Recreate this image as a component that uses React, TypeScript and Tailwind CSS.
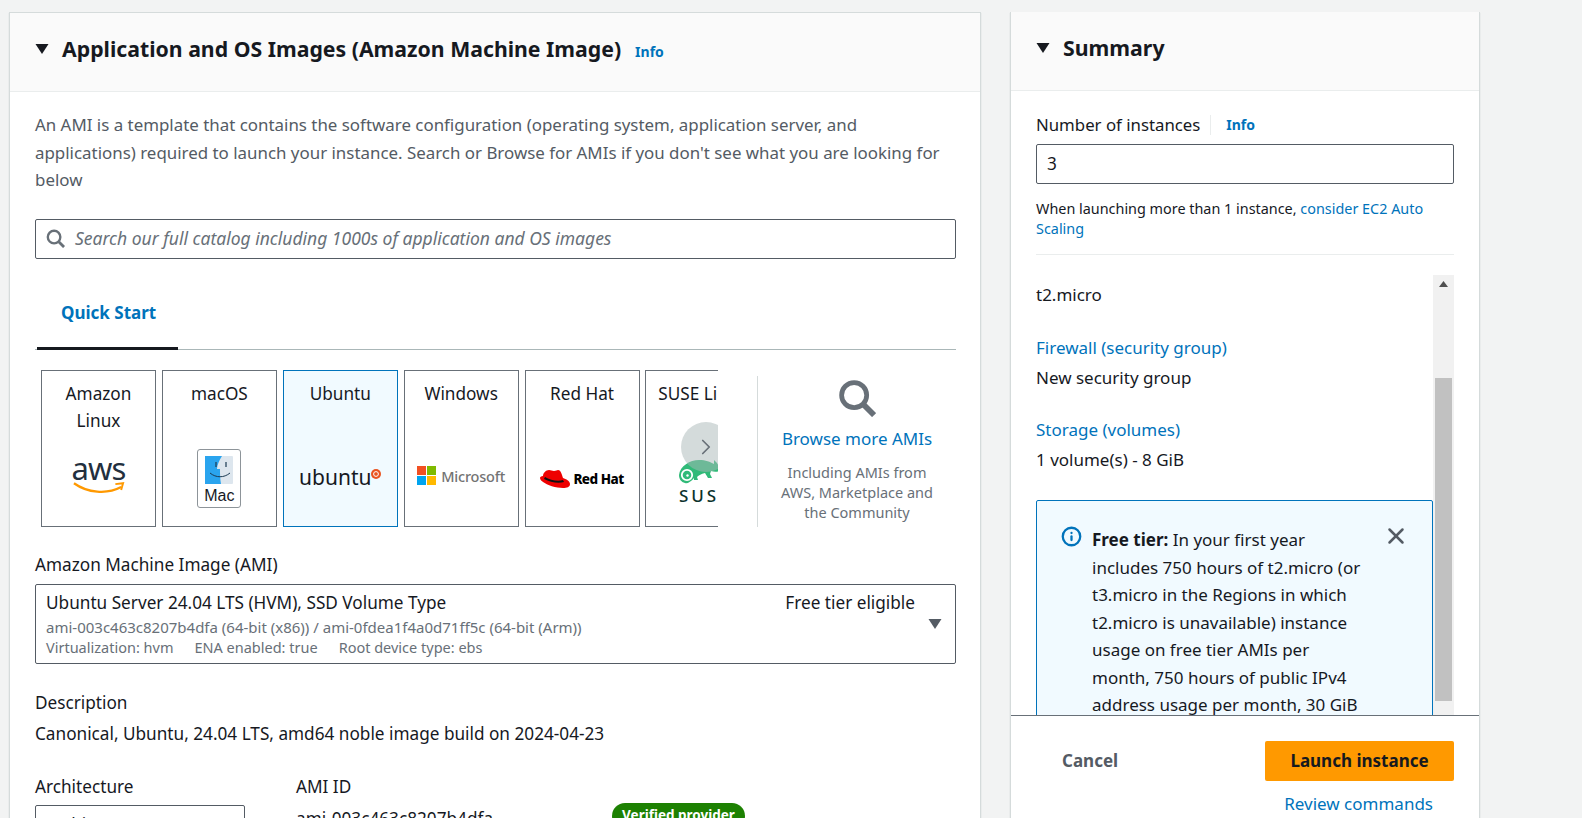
import { X, ChevronRight, Info as InfoIcon } from "lucide-react";
import type { ReactNode } from "react";

function Caret() {
  return (
    <svg width="14" height="12" viewBox="0 0 14 12" className="shrink-0">
      <path d="M0.5 1h13L7 11z" fill="#16191f" />
    </svg>
  );
}

function SearchGlyph({ size, className }: { size: number; className: string }) {
  return (
    <svg width={size} height={size} viewBox="0 0 20 20" fill="none" stroke="currentColor" className={className}>
      <circle cx="8.5" cy="8.5" r="6.6" strokeWidth="2.5" />
      <path d="M13.4 13.4L19 19" strokeWidth="3" />
    </svg>
  );
}

function AwsLogo() {
  return (
    <div className="flex flex-col items-center">
      <span className="text-[31px] leading-[26px] tracking-[-0.8px] text-[#232f3e]">aws</span>
      <svg width="52" height="14" viewBox="0 0 54 14">
        <path d="M1 2c14 10 34 12 49 4" stroke="#ff9900" strokeWidth="2.4" fill="none" />
        <path d="M44 3l8-1-2 7" stroke="#ff9900" strokeWidth="2" fill="none" />
      </svg>
    </div>
  );
}

function MacLogo() {
  return (
    <div className="flex h-[59px] w-[44px] flex-col items-center rounded-[3px] border border-[#8d9499] bg-white pt-[6px]">
      <svg width="28" height="28" viewBox="0 0 28 28">
        <rect width="28" height="28" rx="1" fill="#dde6ee" />
        <path d="M0 0h17c-3 5-5 9-5 13h3c0 5 0 10 1 15H0z" fill="#2aa4ee" />
        <path d="M11 6v5M21 6v5" stroke="#1b3a52" strokeWidth="1.2" />
        <path d="M5 17c6 5 14 5 20 0" stroke="#1b3a52" strokeWidth="1" fill="none" />
      </svg>
      <span className="mt-[3px] font-['Liberation_Sans',sans-serif] text-[16px] leading-[18px] text-[#16191f]">Mac</span>
    </div>
  );
}

function UbuntuLogo() {
  return (
    <div className="flex items-start">
      <span className="text-[21px] leading-[26px] text-[#16191f]">ubuntu</span>
      <svg width="10" height="10" viewBox="0 0 10 10" className="mt-[5px]">
        <circle cx="5" cy="5" r="5" fill="#e95420" />
        <circle cx="5" cy="5" r="2.4" stroke="#fff" strokeWidth="1" fill="none" />
      </svg>
    </div>
  );
}

function MicrosoftLogo() {
  return (
    <div className="flex items-center gap-[5px]">
      <div className="grid grid-cols-2 gap-[1px]">
        <div className="size-[9px] bg-[#f25022]" />
        <div className="size-[9px] bg-[#7fba00]" />
        <div className="size-[9px] bg-[#00a4ef]" />
        <div className="size-[9px] bg-[#ffb900]" />
      </div>
      <span className="text-[14.5px] leading-5 font-medium tracking-[-0.2px] text-[#737373]">Microsoft</span>
    </div>
  );
}

function RedHatLogo() {
  return (
    <div className="flex items-center gap-[3px]">
      <svg width="30" height="20" viewBox="0 0 30 20">
        <path d="M9 1c2 0 3 1 5 1s3-1 4-1c3 0 4 5 5 8 3 1 7 3 7 6 0 3-3 4-7 4-7 0-16-3-20-6-1-1-3-2-3-4 0-1 1-2 3-2 0-3 3-6 6-6z" fill="#e00" />
        <path d="M5 8c5 3 13 5 18 3l1 2c-6 2-14 0-20-3z" fill="#111" />
      </svg>
      <span className="text-[13.5px] leading-5 font-extrabold tracking-[-0.5px] text-black">Red Hat</span>
    </div>
  );
}

function SuseLogo() {
  return (
    <div className="flex w-[70px] flex-col items-start">
      <svg width="44" height="24" viewBox="0 0 44 24">
        <path d="M0 15C1 6 11 0 20 0c7 0 11 2 15 4V0l3 3 3 5v3c-3 1-6 1-9 0l-1 3 2 4h-4l-3-5c-4 1-6 2-8 4l1 3h-4v-2C12 22 8 24 6 23 2 22 0 19 0 15z" fill="#30ba78" />
        <circle cx="8" cy="15" r="5.2" fill="none" stroke="#fff" strokeWidth="1.8" />
        <circle cx="8.5" cy="15.5" r="1.2" fill="#fff" />
      </svg>
      <span className="mt-[2px] text-[17px] leading-5 font-medium tracking-[3px] whitespace-nowrap text-[#0c322c]">SUSE</span>
    </div>
  );
}

function OsCard({ label, selected, logoClass, children }: { label: ReactNode; selected?: boolean; logoClass: string; children: ReactNode }) {
  return (
    <div
      className={`flex h-[157px] w-[115px] shrink-0 flex-col items-center overflow-hidden border px-1 pt-[9px] text-center ${
        selected ? "border-[#0073bb] bg-[#f1faff]" : "border-[#687078] bg-white"
      }`}
    >
      <div className="h-[55px] text-[17.2px] leading-[27px] whitespace-pre-line text-[#16191f]">{label}</div>
      <div className={`flex h-[80px] w-full items-center justify-center ${logoClass}`}>{children}</div>
    </div>
  );
}

function AmiPanel() {
  return (
    <section className="h-[900px] w-[972px] shrink-0 border border-[#d5dbdb] bg-white shadow-[0_1px_1px_rgba(0,28,36,0.2)]">
      <header className="flex h-[79px] items-center gap-[13px] border-b border-[#eaeded] bg-[#fafafa] pb-[6px] pl-[25px]">
        <Caret />
        <h2 className="text-[21.25px] font-bold text-[#16191f]">Application and OS Images (Amazon Machine Image)</h2>
        <a className="mt-[5px] ml-[1px] text-[14px] font-bold text-[#0073bb]">Info</a>
      </header>

      <div className="px-[25px] pt-[19px]">
        <p className="w-[921px] text-[16.9px] leading-[27.5px] text-[#545b64]">
          An AMI is a template that contains the software configuration (operating system, application server, and applications) required to launch your instance. Search or Browse for AMIs if you don't see what you are looking for below
        </p>

        <div className="mt-[25px] flex h-[40px] w-[921px] items-center gap-[10px] rounded-[2px] border border-[#545b64] pl-[10px]">
          <SearchGlyph size={19} className="text-[#687078]" />
          <span className="text-[17.5px] text-[#687078] italic">Search our full catalog including 1000s of application and OS images</span>
        </div>

        <div className="mt-[29px] h-[62px] w-[921px] border-b border-[#aab7b8]">
          <div className="ml-[2px] flex h-[62px] w-[141px] items-center border-b-[3px] border-[#16191f] pb-[8px] pl-[24px] text-[17px] font-bold text-[#0073bb]">
            Quick Start
          </div>
        </div>

        <div className="mt-[20px] flex h-[157px] w-[921px]">
          <div className="relative ml-[6px] flex w-[677px] gap-[5.9px] overflow-hidden">
            <OsCard label={"Amazon\nLinux"} logoClass="pt-[1px]"><AwsLogo /></OsCard>
            <OsCard label="macOS" logoClass="pt-[8px]"><MacLogo /></OsCard>
            <OsCard label="Ubuntu" selected logoClass="pt-[4px]"><UbuntuLogo /></OsCard>
            <OsCard label="Windows" logoClass="pt-[2px]"><MicrosoftLogo /></OsCard>
            <OsCard label="Red Hat" logoClass="pt-[8px]"><RedHatLogo /></OsCard>
            <OsCard label="SUSE Linux" logoClass="pl-[22px] pt-[16px]"><SuseLogo /></OsCard>
            <div className="absolute top-[52px] left-[640px] flex size-[50px] items-center justify-center rounded-full bg-[#aab7b8]/50">
              <ChevronRight size={26} strokeWidth={1.6} className="text-[#687078]" />
            </div>
          </div>
          <div className="mt-[6px] ml-[39px] flex w-[199px] flex-col items-center border-l border-[#d5dbdb] text-center">
            <SearchGlyph size={38} className="mt-[3px] text-[#687078]" />
            <a className="mt-[10px] text-[17px] leading-6 text-[#0073bb]">Browse more AMIs</a>
            <p className="mt-[11px] w-[165px] text-[14.5px] leading-5 text-[#687078]">Including AMIs from AWS, Marketplace and the Community</p>
          </div>
        </div>

        <div className="mt-[24px] text-[17.2px] leading-[27px] text-[#16191f]">Amazon Machine Image (AMI)</div>
        <div className="mt-[6px] flex h-[80px] w-[921px] rounded-[2px] border border-[#545b64] pl-[10px]">
          <div className="flex-1 pt-[4px]">
            <div className="flex justify-between pr-[13px] text-[17.2px] leading-[27px] text-[#16191f]">
              <span>Ubuntu Server 24.04 LTS (HVM), SSD Volume Type</span>
              <span>Free tier eligible</span>
            </div>
            <div className="mt-[1px] text-[15px] leading-[20px] text-[#687078]">ami-003c463c8207b4dfa (64-bit (x86)) / ami-0fdea1f4a0d71ff5c (64-bit (Arm))</div>
            <div className="flex gap-[21px] text-[14.5px] leading-[20px] text-[#687078]">
              <span>Virtualization: hvm</span>
              <span>ENA enabled: true</span>
              <span>Root device type: ebs</span>
            </div>
          </div>
          <div className="flex w-[27px] items-center justify-start">
            <svg width="14" height="12" viewBox="0 0 14 12">
              <path d="M0.5 1h13L7 11z" fill="#545b64" />
            </svg>
          </div>
        </div>

        <div className="mt-[25px] text-[17.2px] leading-[27px] text-[#16191f]">Description</div>
        <div className="mt-[4px] text-[17.2px] leading-[27px] text-[#16191f]">Canonical, Ubuntu, 24.04 LTS, amd64 noble image build on 2024-04-23</div>

        <div className="mt-[26px] flex">
          <div className="w-[261px]">
            <div className="text-[17.2px] leading-[27px] text-[#16191f]">Architecture</div>
            <div className="mt-[5px] h-[40px] w-[210px] rounded-[2px] border border-[#545b64] pt-[5px] pl-[10px] text-[17.2px] leading-[27px] text-[#16191f]">64-bit (x86)</div>
          </div>
          <div className="w-[316px]">
            <div className="text-[17.2px] leading-[27px] text-[#16191f]">AMI ID</div>
            <div className="mt-[5px] text-[17.2px] leading-[27px] text-[#16191f]">ami-003c463c8207b4dfa</div>
          </div>
          <div className="pt-[30px]">
            <span className="flex h-[26px] w-[133px] items-center justify-center rounded-[13px] bg-[#1d8102] text-[13.5px] font-bold text-white">Verified provider</span>
          </div>
        </div>
      </div>
    </section>
  );
}

function SummaryPanel() {
  return (
    <aside className="flex h-[900px] w-[470px] shrink-0 flex-col border-x border-[#d5dbdb] bg-white shadow-[0_1px_1px_rgba(0,28,36,0.2)]">
      <header className="flex h-[79px] shrink-0 items-center gap-[13px] border-b border-[#eaeded] bg-[#fafafa] pb-[6px] pl-[25px]">
        <Caret />
        <h2 className="text-[21.3px] font-bold text-[#16191f]">Summary</h2>
      </header>

      <div className="shrink-0 px-[25px]">
        <div className="mt-[20px] flex h-[27px] items-center text-[16.8px] text-[#16191f]">
          Number of instances
          <span className="mr-[15px] ml-[10px] h-[20px] w-px bg-[#eaeded]" />
          <a className="text-[14px] font-bold text-[#0073bb]">Info</a>
        </div>
        <div className="mt-[6px] flex h-[40px] w-[418px] items-center rounded-[2px] border border-[#545b64] pl-[10px] text-[17.2px] text-[#16191f]">3</div>
        <p className="mt-[15px] w-[418px] text-[14.4px] leading-[20px] text-[#16191f]">
          When launching more than 1 instance, <a className="text-[#0073bb]">consider EC2 Auto Scaling</a>
        </p>
        <div className="mt-[15px] h-px w-[418px] bg-[#eaeded]" />
      </div>

      <div className="mt-[20px] flex h-[440px] shrink-0 pl-[25px]">
        <div className="w-[397px] overflow-hidden text-[17px] leading-[27px] text-[#16191f]">
          <div className="mt-[6px]">t2.micro</div>
          <a className="mt-[26px] block text-[#0073bb]">Firewall (security group)</a>
          <div className="mt-[3px]">New security group</div>
          <a className="mt-[25px] block text-[#0073bb]">Storage (volumes)</a>
          <div className="mt-[3px]">1 volume(s) - 8 GiB</div>
          <div className="mt-[27px] flex h-[400px] rounded-[2px] border border-[#0073bb] bg-[#f1faff] pt-[25px] pl-[24px]">
            <InfoIcon size={21} strokeWidth={2.6} className="mr-[10px] shrink-0 text-[#0073bb]" />
            <p className="w-[275px] leading-[27.5px]">
              <b>Free tier:</b> In your first year includes 750 hours of t2.micro (or t3.micro in the Regions in which t2.micro is unavailable) instance usage on free tier AMIs per month, 750 hours of public IPv4 address usage per month, 30 GiB
            </p>
            <X size={26} strokeWidth={2.3} className="mt-[-3px] ml-[16px] shrink-0 text-[#545b64]" />
          </div>
        </div>
        <div className="flex w-[21px] flex-col bg-[#f1f1f1]">
          <div className="flex h-[17px] items-center justify-center">
            <svg width="9" height="6" viewBox="0 0 9 6"><path d="M4.5 0L9 6H0z" fill="#505050" /></svg>
          </div>
          <div className="mx-auto mt-[86px] h-[323px] w-[17px] bg-[#c1c1c1]" />
        </div>
      </div>

      <footer className="shrink-0 border-t border-[#687078]">
        <div className="flex items-center justify-between pt-[25px] pr-[25px] pl-[51px]">
          <a className="text-[17px] font-bold text-[#545b64]">Cancel</a>
          <button className="h-[40px] w-[189px] rounded-[2px] bg-[#ff9900] text-[17px] font-bold text-[#16191f]">Launch instance</button>
        </div>
        <div className="mt-[9px] w-[422px] text-right text-[17px] leading-[27px] text-[#0073bb]">Review commands</div>
      </footer>
    </aside>
  );
}

export default function App() {
  return (
    <div className="flex h-[818px] gap-[29px] overflow-hidden bg-[#f2f3f3] pt-[12px] pl-[9px] font-['Noto_Sans',sans-serif]">
      <AmiPanel />
      <SummaryPanel />
    </div>
  );
}
